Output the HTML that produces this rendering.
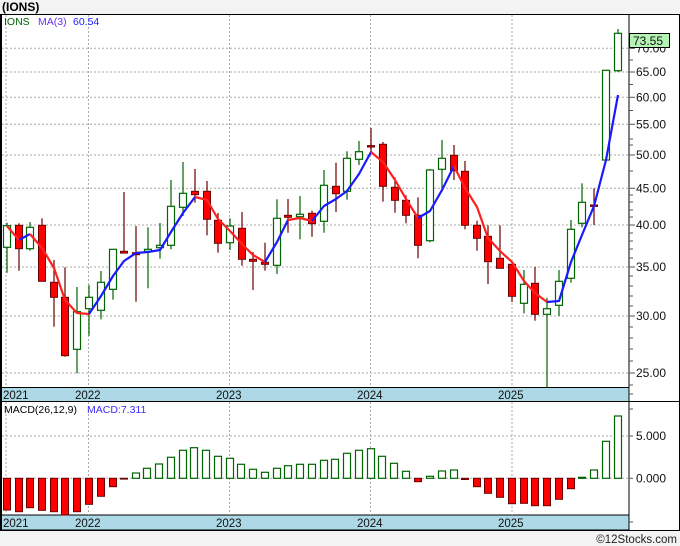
<!DOCTYPE html>
<html><head><meta charset="utf-8"><style>
html,body{margin:0;padding:0;background:#f3f3f3;width:680px;height:546px;overflow:hidden}
svg{display:block;font-family:"Liberation Sans","DejaVu Sans",sans-serif}
.g line{stroke:#006400;stroke-width:1.2}
.g rect{fill:#fff;stroke:#006400;stroke-width:1.2}
.r line{stroke:#6b0000;stroke-width:1.2}
.r rect{fill:#f00;stroke:#6b0000;stroke-width:1}
.grid line{stroke:#aaa;stroke-width:1;stroke-dasharray:2,2}
.ax{font-size:12px;fill:#111}
.yr{font-size:11.5px;fill:#111}
</style></head><body>
<svg width="680" height="546" viewBox="0 0 680 546">
<text x="2" y="11" font-size="12" font-weight="bold" fill="#000">(IONS)</text>
<rect x="0.5" y="14.5" width="679" height="516" fill="#fff" stroke="#000"/>
<!-- bands -->
<rect x="1" y="387.5" width="628" height="14" fill="#add8e6" stroke="#000"/>
<rect x="1" y="515" width="628" height="15" fill="#add8e6" stroke="#000"/>
<line x1="629" y1="14" x2="629" y2="530" stroke="#000"/>
<line x1="0" y1="401.5" x2="680" y2="401.5" stroke="#000"/>
<line x1="1" y1="14" x2="1" y2="530" stroke="#000" stroke-width="2"/>
<g class="grid">
<line x1="2" y1="48.3" x2="629" y2="48.3"/><line x1="2" y1="72" x2="629" y2="72"/><line x1="2" y1="97.3" x2="629" y2="97.3"/><line x1="2" y1="124.3" x2="629" y2="124.3"/><line x1="2" y1="155" x2="629" y2="155"/><line x1="2" y1="188.3" x2="629" y2="188.3"/><line x1="2" y1="225" x2="629" y2="225"/><line x1="2" y1="267" x2="629" y2="267"/><line x1="2" y1="316" x2="629" y2="316"/><line x1="2" y1="373" x2="629" y2="373"/>
<line x1="6" y1="15" x2="6" y2="387"/><line x1="88.5" y1="15" x2="88.5" y2="387"/><line x1="229.5" y1="15" x2="229.5" y2="387"/><line x1="370.5" y1="15" x2="370.5" y2="387"/><line x1="512" y1="15" x2="512" y2="387"/>
<line x1="6" y1="402" x2="6" y2="515"/><line x1="88.5" y1="402" x2="88.5" y2="515"/><line x1="229.5" y1="402" x2="229.5" y2="515"/><line x1="370.5" y1="402" x2="370.5" y2="515"/><line x1="512" y1="402" x2="512" y2="515"/>
<line x1="2" y1="436" x2="629" y2="436"/><line x1="2" y1="478.3" x2="629" y2="478.3"/>
</g>
<!-- axis ticks -->
<g stroke="#555" stroke-width="1">
<line x1="629" y1="48.3" x2="635" y2="48.3"/><line x1="629" y1="72" x2="635" y2="72"/><line x1="629" y1="97.3" x2="635" y2="97.3"/><line x1="629" y1="124.3" x2="635" y2="124.3"/><line x1="629" y1="155" x2="635" y2="155"/><line x1="629" y1="188.3" x2="635" y2="188.3"/><line x1="629" y1="225" x2="635" y2="225"/><line x1="629" y1="267" x2="635" y2="267"/><line x1="629" y1="316" x2="635" y2="316"/><line x1="629" y1="373" x2="635" y2="373"/>
<line x1="629" y1="60" x2="633" y2="60"/><line x1="629" y1="84.5" x2="633" y2="84.5"/><line x1="629" y1="110.5" x2="633" y2="110.5"/><line x1="629" y1="139" x2="633" y2="139"/><line x1="629" y1="145" x2="633" y2="145"/><line x1="629" y1="171" x2="633" y2="171"/><line x1="629" y1="195" x2="633" y2="195"/><line x1="629" y1="202" x2="633" y2="202"/><line x1="629" y1="210" x2="633" y2="210"/><line x1="629" y1="217" x2="633" y2="217"/><line x1="629" y1="233" x2="633" y2="233"/><line x1="629" y1="241" x2="633" y2="241"/><line x1="629" y1="249" x2="633" y2="249"/><line x1="629" y1="258" x2="633" y2="258"/><line x1="629" y1="276" x2="633" y2="276"/><line x1="629" y1="286" x2="633" y2="286"/><line x1="629" y1="296" x2="633" y2="296"/><line x1="629" y1="306" x2="633" y2="306"/><line x1="629" y1="327" x2="633" y2="327"/><line x1="629" y1="338" x2="633" y2="338"/><line x1="629" y1="349" x2="633" y2="349"/><line x1="629" y1="361" x2="633" y2="361"/><line x1="629" y1="385" x2="633" y2="385"/>
<line x1="629" y1="394" x2="633" y2="394"/><line x1="629" y1="436" x2="633" y2="436"/><line x1="629" y1="478.3" x2="633" y2="478.3"/><line x1="629" y1="522" x2="633" y2="522"/><line x1="629" y1="409" x2="633" y2="409"/>
</g>
<g class="ax">
<text x="636" y="52.5">70.00</text><text x="636" y="76">65.00</text><text x="636" y="101.5">60.00</text><text x="636" y="128.5">55.00</text><text x="636" y="159">50.00</text><text x="636" y="192.5">45.00</text><text x="636" y="229">40.00</text><text x="636" y="271">35.00</text><text x="636" y="320">30.00</text><text x="636" y="377">25.00</text>
<text x="636" y="440">5.000</text><text x="636" y="482.5">0.000</text>
</g>
<rect x="629.5" y="33.5" width="40" height="14" fill="#b4f5b4" stroke="#000"/>
<text x="633" y="45" class="ax">73.55</text>
<g class="yr">
<text x="3" y="399">2021</text><text x="75" y="399">2022</text><text x="216" y="399">2023</text><text x="357" y="399">2024</text><text x="498" y="399">2025</text>
<text x="3" y="527">2021</text><text x="75" y="527">2022</text><text x="216" y="527">2023</text><text x="357" y="527">2024</text><text x="498" y="527">2025</text>
</g>
<text x="4" y="25" font-size="10.5" fill="#006400">IONS</text>
<text x="38" y="25" font-size="10.5" fill="#6a2bff">MA(3)</text>
<text x="73" y="25" font-size="10.5" fill="#2020ff">60.54</text>
<text x="4" y="413" font-size="10.5" fill="#000">MACD(26,12,9)</text>
<text x="87" y="413" font-size="10.5" fill="#3a2bff">MACD:7.311</text>
<!-- green candles -->
<g class="g">
<line x1="7" y1="222.7" x2="7" y2="272.7"/><rect x="3.5" y="225.7" width="7" height="21.6"/>
<line x1="30" y1="222" x2="30" y2="250.7"/><rect x="26.5" y="227.3" width="7" height="21.4"/>
<line x1="77" y1="287" x2="77" y2="373.3"/><rect x="73.5" y="311.7" width="7" height="37.6"/>
<line x1="89" y1="285" x2="89" y2="335.7"/><rect x="85.5" y="297.3" width="7" height="11.4"/>
<line x1="101" y1="271" x2="101" y2="319.3"/><rect x="97.5" y="282.3" width="7" height="28"/>
<line x1="113" y1="249" x2="113" y2="299.7"/><rect x="109.5" y="249.3" width="7" height="40"/>
<line x1="148" y1="227.3" x2="148" y2="288.3"/><rect x="144.5" y="249.3" width="7" height="2"/>
<line x1="160" y1="223" x2="160" y2="258.7"/><rect x="156.5" y="245.3" width="7" height="2.4"/>
<line x1="171" y1="180" x2="171" y2="249.3"/><rect x="167.5" y="206.3" width="7" height="39"/>
<line x1="183" y1="162" x2="183" y2="216"/><rect x="179.5" y="193.3" width="7" height="14"/>
<line x1="230" y1="218.3" x2="230" y2="250"/><rect x="226.5" y="226" width="7" height="16.7"/>
<line x1="277" y1="199.3" x2="277" y2="274"/><rect x="273.5" y="218.3" width="7" height="47"/>
<line x1="300" y1="196" x2="300" y2="239.3"/><rect x="296.5" y="214.3" width="7" height="2.4"/>
<line x1="324" y1="170" x2="324" y2="232.7"/><rect x="320.5" y="185.3" width="7" height="36"/>
<line x1="347" y1="151.3" x2="347" y2="199.7"/><rect x="343.5" y="158.3" width="7" height="33"/>
<line x1="359" y1="141" x2="359" y2="165"/><rect x="355.5" y="151.7" width="7" height="7.6"/>
<line x1="430" y1="169" x2="430" y2="242.3"/><rect x="426.5" y="170" width="7" height="70.7"/>
<line x1="442" y1="140" x2="442" y2="191.7"/><rect x="438.5" y="158.3" width="7" height="11"/>
<line x1="524" y1="270" x2="524" y2="313.3"/><rect x="520.5" y="284.3" width="7" height="19"/>
<line x1="547" y1="298" x2="547" y2="387"/><rect x="543.5" y="308.7" width="7" height="5.6"/>
<line x1="559" y1="270" x2="559" y2="316"/><rect x="555.5" y="281.3" width="7" height="24"/>
<line x1="571" y1="220" x2="571" y2="282.7"/><rect x="567.5" y="229.3" width="7" height="49"/>
<line x1="582" y1="183.3" x2="582" y2="227.3"/><rect x="578.5" y="202.3" width="7" height="21"/>
<line x1="606" y1="70.3" x2="606" y2="160"/><rect x="602.5" y="70.3" width="7" height="89.7"/>
<line x1="618" y1="29" x2="618" y2="72"/><rect x="614.5" y="33.3" width="7" height="37.4"/>
</g>
<g class="r">
<line x1="19" y1="223.3" x2="19" y2="270.7"/><rect x="15.5" y="225.3" width="7" height="23.4"/>
<line x1="42" y1="218.3" x2="42" y2="281.3"/><rect x="38.5" y="225.3" width="7" height="56"/>
<line x1="54" y1="260" x2="54" y2="326.7"/><rect x="50.5" y="282.3" width="7" height="15"/>
<line x1="65" y1="267.3" x2="65" y2="356.7"/><rect x="61.5" y="297.3" width="7" height="58.4"/>
<line x1="124" y1="192" x2="124" y2="253.3"/><rect x="120.5" y="251.3" width="7" height="1.8"/>
<line x1="136" y1="226" x2="136" y2="301.7"/><rect x="132.5" y="252.7" width="7" height="2"/>
<line x1="195" y1="169" x2="195" y2="202.7"/><rect x="191.5" y="191.3" width="7" height="3.4"/>
<line x1="207" y1="181" x2="207" y2="235.3"/><rect x="203.5" y="191.3" width="7" height="28"/>
<line x1="218" y1="213" x2="218" y2="252.7"/><rect x="214.5" y="220.3" width="7" height="23"/>
<line x1="242" y1="212" x2="242" y2="265.7"/><rect x="238.5" y="228.3" width="7" height="31"/>
<line x1="253" y1="252" x2="253" y2="290"/><rect x="249.5" y="259.3" width="7" height="2"/>
<line x1="265" y1="242.7" x2="265" y2="270.7"/><rect x="261.5" y="262.3" width="7" height="2"/>
<line x1="288" y1="199" x2="288" y2="232.7"/><rect x="284.5" y="215.3" width="7" height="2"/>
<line x1="312" y1="210.7" x2="312" y2="236.7"/><rect x="308.5" y="213.3" width="7" height="10.4"/>
<line x1="336" y1="162.7" x2="336" y2="212"/><rect x="332.5" y="186.3" width="7" height="7.4"/>
<line x1="371" y1="128" x2="371" y2="153.3"/><rect x="367.5" y="145.6" width="7" height="1.4"/>
<line x1="383" y1="142" x2="383" y2="201.7"/><rect x="379.5" y="144.3" width="7" height="42"/>
<line x1="395" y1="177.3" x2="395" y2="212.7"/><rect x="391.5" y="187.3" width="7" height="13"/>
<line x1="406" y1="195.3" x2="406" y2="223.3"/><rect x="402.5" y="200.3" width="7" height="15"/>
<line x1="418" y1="197.3" x2="418" y2="258.3"/><rect x="414.5" y="215.3" width="7" height="30"/>
<line x1="454" y1="145" x2="454" y2="180"/><rect x="450.5" y="155.3" width="7" height="15.4"/>
<line x1="465" y1="161" x2="465" y2="229.3"/><rect x="461.5" y="171.3" width="7" height="54"/>
<line x1="477" y1="220.7" x2="477" y2="250.7"/><rect x="473.5" y="225.3" width="7" height="13"/>
<line x1="488" y1="225.3" x2="488" y2="284"/><rect x="484.5" y="236.3" width="7" height="25.4"/>
<line x1="500" y1="225.3" x2="500" y2="268.3"/><rect x="496.5" y="258.3" width="7" height="10"/>
<line x1="512" y1="264.3" x2="512" y2="302"/><rect x="508.5" y="264.3" width="7" height="32"/>
<line x1="535" y1="267" x2="535" y2="320.7"/><rect x="531.5" y="283.3" width="7" height="31"/>
<line x1="594" y1="188.3" x2="594" y2="225"/><rect x="590.5" y="205" width="7" height="1.4"/>
</g>
<!-- MA line -->
<g fill="none" stroke-width="2.2" stroke-linejoin="round">
<polyline stroke="#ff2020" points="7,226 19,240"/>
<polyline stroke="#1a1aff" points="19,240 30,234"/>
<polyline stroke="#ff2020" points="30,234 42,248 54,268 65,300 77,313 89,314"/>
<polyline stroke="#1a1aff" points="89,314 101,296 113,276 124,261 136,253 148,252 160,250 171,232 183,213 195,197"/>
<polyline stroke="#ff2020" points="195,197 207,200 218,219 230,231 242,244 253,255 265,262"/>
<polyline stroke="#1a1aff" points="265,262 277,242 288,220"/>
<polyline stroke="#ff2020" points="288,220 300,218 312,221"/>
<polyline stroke="#1a1aff" points="312,221 324,206 336,199 347,191 359,174 371,152"/>
<polyline stroke="#ff2020" points="371,152 383,162 395,180 406,199 418,218"/>
<polyline stroke="#1a1aff" points="418,218 430,211 442,190 454,166"/>
<polyline stroke="#ff2020" points="454,166 465,188 477,207 488,238 500,251 512,262 524,281 535,293 547,302"/>
<polyline stroke="#1a1aff" points="547,302 559,301 571,262 582,235 594,206 606,160 618,95"/>
</g>
<!-- MACD -->
<g fill="#f00" stroke="#6b0000" stroke-width="1">
<rect x="3.5" y="478.3" width="7" height="31.7"/><rect x="15.5" y="478.3" width="7" height="33.4"/><rect x="26.5" y="478.3" width="7" height="29.4"/><rect x="38.5" y="478.3" width="7" height="32"/><rect x="50.5" y="478.3" width="7" height="33.4"/><rect x="61.5" y="478.3" width="7" height="36.7"/><rect x="73.5" y="478.3" width="7" height="33.4"/><rect x="85.5" y="478.3" width="7" height="26"/><rect x="97.5" y="478.3" width="7" height="18"/><rect x="109.5" y="478.3" width="7" height="8.4"/><rect x="120.5" y="478.3" width="7" height="0.8"/>
<rect x="414.5" y="478.3" width="7" height="3.4"/><rect x="461.5" y="478.3" width="7" height="1.2"/><rect x="473.5" y="478.3" width="7" height="8.4"/><rect x="484.5" y="478.3" width="7" height="15"/><rect x="496.5" y="478.3" width="7" height="19"/><rect x="508.5" y="478.3" width="7" height="25.4"/><rect x="520.5" y="478.3" width="7" height="25"/><rect x="531.5" y="478.3" width="7" height="27.4"/><rect x="543.5" y="478.3" width="7" height="27.4"/><rect x="555.5" y="478.3" width="7" height="21"/><rect x="567.5" y="478.3" width="7" height="10.4"/>
</g>
<g fill="#fff" stroke="#006400" stroke-width="1.2">
<rect x="132.5" y="473" width="7" height="5.3"/><rect x="143.5" y="468.3" width="7" height="10"/><rect x="155.5" y="464" width="7" height="14.3"/><rect x="167.5" y="457.3" width="7" height="21"/><rect x="179.5" y="450.3" width="7" height="28"/><rect x="190.5" y="447.7" width="7" height="30.6"/><rect x="202.5" y="450.3" width="7" height="28"/><rect x="214.5" y="456.3" width="7" height="22"/><rect x="226.5" y="458.3" width="7" height="20"/><rect x="237.5" y="464.3" width="7" height="14"/><rect x="249.5" y="469.3" width="7" height="9"/><rect x="261.5" y="472.3" width="7" height="6"/><rect x="273.5" y="468.3" width="7" height="10"/><rect x="284.5" y="465.7" width="7" height="12.6"/><rect x="296.5" y="464.3" width="7" height="14"/><rect x="308.5" y="464.3" width="7" height="14"/><rect x="320.5" y="460.3" width="7" height="18"/><rect x="331.5" y="459.3" width="7" height="19"/><rect x="343.5" y="453.3" width="7" height="25"/><rect x="355.5" y="450.3" width="7" height="28"/><rect x="367.5" y="448.7" width="7" height="29.6"/><rect x="378.5" y="456.3" width="7" height="22"/><rect x="390.5" y="463.3" width="7" height="15"/><rect x="402.5" y="471.3" width="7" height="7"/>
<rect x="426.5" y="476.3" width="7" height="2"/><rect x="438.5" y="471" width="7" height="7.3"/><rect x="450.5" y="470" width="7" height="8.3"/>
<rect x="578.5" y="477.3" width="7" height="1"/><rect x="590.5" y="470" width="7" height="8.3"/><rect x="602.5" y="441.3" width="7" height="37"/><rect x="614.5" y="416" width="7" height="62.3"/>
</g>
<text x="677" y="543" font-size="11.5" fill="#222" text-anchor="end">©12Stocks.com</text>
</svg>
</body></html>
